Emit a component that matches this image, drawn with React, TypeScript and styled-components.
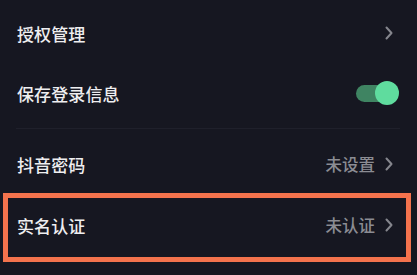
import React from "react";
import styled, { createGlobalStyle } from "styled-components";

const Global = createGlobalStyle`
  html, body { margin: 0; padding: 0; background: #161721; }
  body { font-family: "Noto Sans CJK SC", "Noto Sans", sans-serif; }
`;

const Page = styled.div`
  width: 417px;
  height: 275px;
  background: #161721;
  padding-top: 3px;
  box-sizing: border-box;
  overflow: hidden;
`;

const Row = styled.div<{ $h: number; $inset?: boolean }>`
  height: ${(p) => p.$h}px;
  display: flex;
  align-items: center;
  justify-content: space-between;
  padding: ${(p) => (p.$inset ? "0 13px 0 9px" : "0 24px 0 17px")};
`;

const Label = styled.span`
  font-size: 17px;
  font-weight: 500;
  color: #eeeef0;
  letter-spacing: 0.1px;
`;

const Right = styled.div`
  display: flex;
  align-items: center;
  gap: 10px;
`;

const Value = styled.span`
  font-size: 16.5px;
  font-weight: 500;
  color: #8b8c93;
`;

const Divider = styled.div`
  height: 1px;
  background: #1f202b;
  margin: 5px 17px 6px 16px;
`;

const Highlight = styled.div`
  margin: 0 6px 0 3px;
  border: 5px solid #f4734d;
  padding-bottom: 5px;
`;

const ToggleWrap = styled.div`
  position: relative;
  width: 43px;
  height: 24px;
  margin-right: -6px;
  display: flex;
  align-items: center;
`;

const Track = styled.div`
  width: 39px;
  height: 17px;
  border-radius: 9px;
  background: #3f8462;
`;

const Knob = styled.div`
  position: absolute;
  right: 0;
  top: 0;
  width: 24px;
  height: 24px;
  border-radius: 50%;
  background: #5fdc9e;
`;

const Chevron = () => (
  <svg width="8" height="14" viewBox="0 0 8 14" fill="none">
    <polyline
      points="1.5,1.5 6.5,7 1.5,12.5"
      stroke="#85868d"
      strokeWidth="2"
      strokeLinecap="round"
      strokeLinejoin="round"
    />
  </svg>
);

const Toggle = () => (
  <ToggleWrap>
    <Track />
    <Knob />
  </ToggleWrap>
);

export default function App() {
  return (
    <>
      <Global />
      <Page>
        <Row $h={60}>
          <Label>授权管理</Label>
          <Chevron />
        </Row>
        <Row $h={60}>
          <Label>保存登录信息</Label>
          <Toggle />
        </Row>
        <Divider />
        <Row $h={58}>
          <Label>抖音密码</Label>
          <Right>
            <Value>未设置</Value>
            <Chevron />
          </Right>
        </Row>
        <Highlight>
          <Row $h={54} $inset>
            <Label>实名认证</Label>
            <Right>
              <Value>未认证</Value>
              <Chevron />
            </Right>
          </Row>
        </Highlight>
      </Page>
    </>
  );
}
